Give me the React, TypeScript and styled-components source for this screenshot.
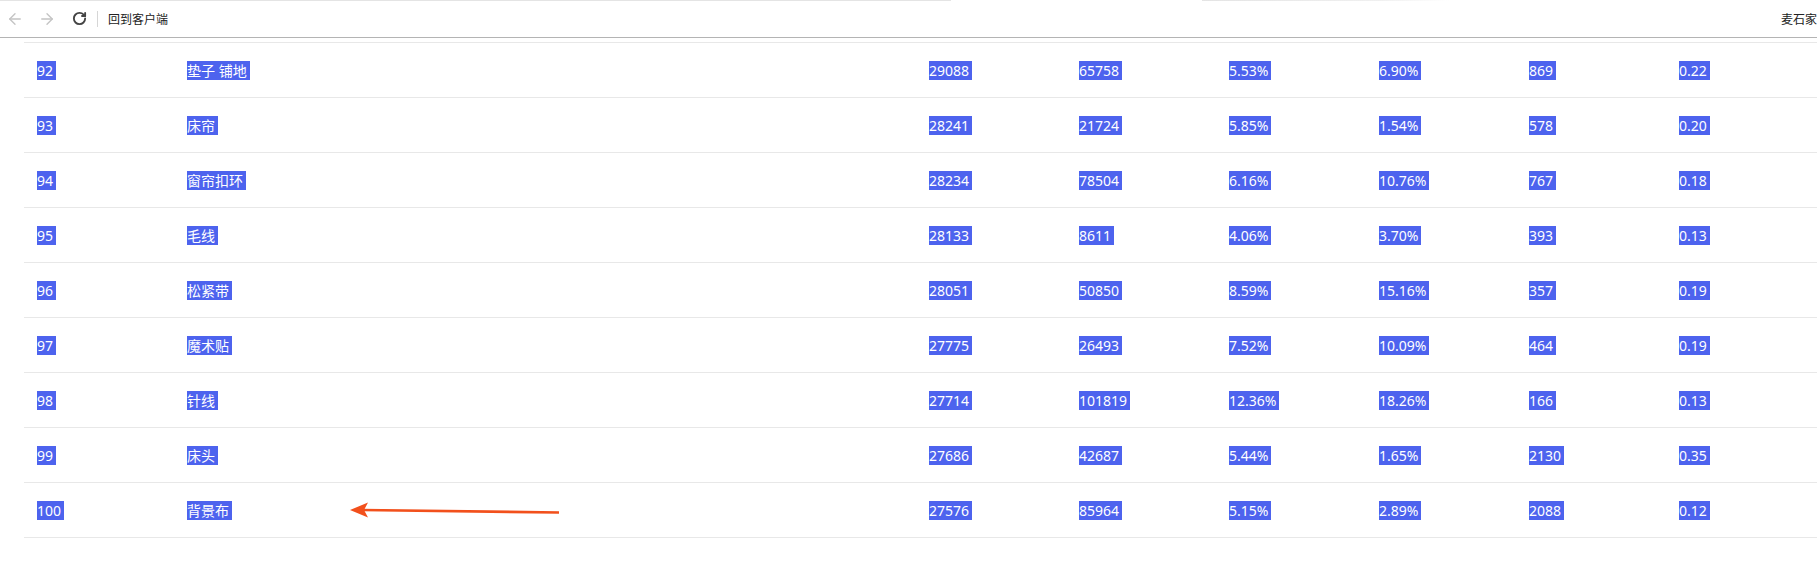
import React from 'react';
import styled, { createGlobalStyle } from 'styled-components';
import { ArrowLeft, ArrowRight, RotateCw } from 'lucide-react';

const GlobalStyle = createGlobalStyle`
    html, body {
        margin: 0;
        padding: 0;
        background: #fff;
        overflow: hidden;
    }
    body {
        font-family: "Noto Sans", "Noto Sans CJK SC", sans-serif;
        color: #333;
    }
`;

const Page = styled.div`
    position: relative;
    width: 1817px;
    height: 568px;
    overflow: hidden;
`;

const TopBar = styled.div`
    display: flex;
    align-items: center;
    height: 37px;
    padding: 0 0 0 6px;
    border-bottom: 1px solid #b4b4b4;
    background:
        linear-gradient(to right, #e4e4e4 0, #e4e4e4 951px, transparent 951px, transparent 1202px, #e4e4e4 1202px, #f0f0f0 1380px, transparent 1450px) top / 100% 1px no-repeat,
        #fff;
    font-family: "Noto Sans CJK SC", sans-serif;
    font-size: 12px;
    color: #222;
`;

const NavButton = styled.span<{ $active?: boolean }>`
    display: flex;
    align-items: center;
    justify-content: center;
    width: 18px;
    margin-right: 14px;
    color: ${(p) => (p.$active ? '#444' : '#c4c4c4')};
`;

const Divider = styled.span`
    width: 1px;
    height: 16px;
    background: #d6d6d6;
    margin: 0 10px 0 -5px;
`;

const BackLink = styled.span`
    flex: 1;
`;

const UserName = styled.span`
    margin-right: -12px;
    white-space: nowrap;
`;

const Table = styled.div`
    margin: 4px 0 0 24px;
    border-bottom: 1px solid #e8e8e8;
`;

const Row = styled.div`
    display: grid;
    grid-template-columns: 150px 742px repeat(5, 150px) 1fr;
    height: 54px;
    border-top: 1px solid #e8e8e8;
    align-items: center;
`;

const Cell = styled.div`
    padding-left: 13px;
    font-size: 14px;
    white-space: pre;
`;

const Selected = styled.span`
    background: #4d63ee;
    color: #fff;
    padding-right: 3px;
`;

const Pointer = styled.svg`
    position: absolute;
    left: 340px;
    top: 498px;
`;

const rows: string[][] = [
    ['92', '垫子 铺地', '29088', '65758', '5.53%', '6.90%', '869', '0.22'],
    ['93', '床帘', '28241', '21724', '5.85%', '1.54%', '578', '0.20'],
    ['94', '窗帘扣环', '28234', '78504', '6.16%', '10.76%', '767', '0.18'],
    ['95', '毛线', '28133', '8611', '4.06%', '3.70%', '393', '0.13'],
    ['96', '松紧带', '28051', '50850', '8.59%', '15.16%', '357', '0.19'],
    ['97', '魔术贴', '27775', '26493', '7.52%', '10.09%', '464', '0.19'],
    ['98', '针线', '27714', '101819', '12.36%', '18.26%', '166', '0.13'],
    ['99', '床头', '27686', '42687', '5.44%', '1.65%', '2130', '0.35'],
    ['100', '背景布', '27576', '85964', '5.15%', '2.89%', '2088', '0.12'],
];

export default function App() {
    return (
        <Page>
            <GlobalStyle />
            <TopBar>
                <NavButton>
                    <ArrowLeft size={18} strokeWidth={1.8} />
                </NavButton>
                <NavButton>
                    <ArrowRight size={18} strokeWidth={1.8} />
                </NavButton>
                <NavButton $active>
                    <RotateCw size={15} strokeWidth={3} />
                </NavButton>
                <Divider />
                <BackLink>回到客户端</BackLink>
                <UserName>麦石家居</UserName>
            </TopBar>

            <Table>
                {rows.map((row) => (
                    <Row key={row[0]}>
                        {row.map((value, i) => (
                            <Cell key={i}>
                                <Selected>{value}</Selected>
                            </Cell>
                        ))}
                    </Row>
                ))}
            </Table>

            {/* annotation arrow drawn over the table */}
            <Pointer width="230" height="26" viewBox="0 0 230 26">
                <line x1="219" y1="14.5" x2="22" y2="12" stroke="#f2501c" strokeWidth="2.6" />
                <polygon points="10,12 28,4.5 24,12 28,19.5" fill="#f2501c" />
            </Pointer>
        </Page>
    );
}
